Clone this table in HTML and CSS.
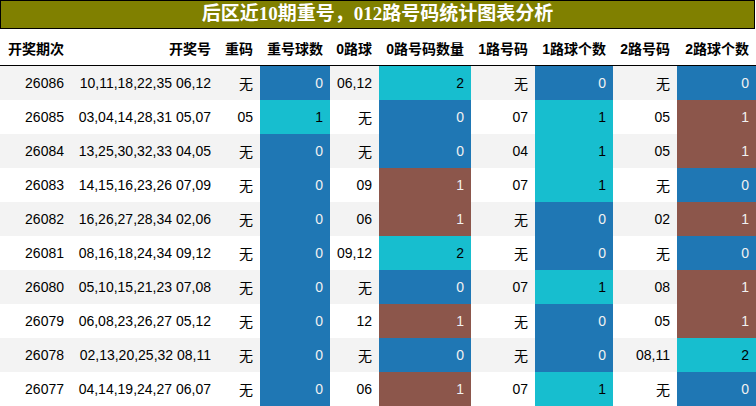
FILE: index.html
```html
<!DOCTYPE html>
<html lang="zh">
<head>
<meta charset="utf-8">
<title>后区近10期重号，012路号码统计图表分析</title>
<link rel="stylesheet" href="styles.css">
</head>
<body>
<div class="page">
  <div class="title">后区近10期重号，012路号码统计图表分析</div>
  <table class="stats">
    <colgroup>
      <col class="c1"><col class="c2"><col class="c3"><col class="c4"><col class="c5">
      <col class="c6"><col class="c7"><col class="c8"><col class="c9"><col class="c10">
    </colgroup>
    <thead>
      <tr>
        <th>开奖期次</th><th>开奖号</th><th>重码</th><th>重号球数</th><th>0路球</th>
        <th>0路号码数量</th><th>1路号码</th><th>1路球个数</th><th>2路号码</th><th>2路球个数</th>
      </tr>
    </thead>
    <tbody>
      <tr><td>26086</td><td>10,11,18,22,35 06,12</td><td>无</td><td class="b">0</td><td>06,12</td><td class="c">2</td><td>无</td><td class="b">0</td><td>无</td><td class="b">0</td></tr>
      <tr><td>26085</td><td>03,04,14,28,31 05,07</td><td>05</td><td class="c">1</td><td>无</td><td class="b">0</td><td>07</td><td class="c">1</td><td>05</td><td class="r">1</td></tr>
      <tr><td>26084</td><td>13,25,30,32,33 04,05</td><td>无</td><td class="b">0</td><td>无</td><td class="b">0</td><td>04</td><td class="c">1</td><td>05</td><td class="r">1</td></tr>
      <tr><td>26083</td><td>14,15,16,23,26 07,09</td><td>无</td><td class="b">0</td><td>09</td><td class="r">1</td><td>07</td><td class="c">1</td><td>无</td><td class="b">0</td></tr>
      <tr><td>26082</td><td>16,26,27,28,34 02,06</td><td>无</td><td class="b">0</td><td>06</td><td class="r">1</td><td>无</td><td class="b">0</td><td>02</td><td class="r">1</td></tr>
      <tr><td>26081</td><td>08,16,18,24,34 09,12</td><td>无</td><td class="b">0</td><td>09,12</td><td class="c">2</td><td>无</td><td class="b">0</td><td>无</td><td class="b">0</td></tr>
      <tr><td>26080</td><td>05,10,15,21,23 07,08</td><td>无</td><td class="b">0</td><td>无</td><td class="b">0</td><td>07</td><td class="c">1</td><td>08</td><td class="r">1</td></tr>
      <tr><td>26079</td><td>06,08,23,26,27 05,12</td><td>无</td><td class="b">0</td><td>12</td><td class="r">1</td><td>无</td><td class="b">0</td><td>05</td><td class="r">1</td></tr>
      <tr><td>26078</td><td>02,13,20,25,32 08,11</td><td>无</td><td class="b">0</td><td>无</td><td class="b">0</td><td>无</td><td class="b">0</td><td>08,11</td><td class="c">2</td></tr>
      <tr><td>26077</td><td>04,14,19,24,27 06,07</td><td>无</td><td class="b">0</td><td>06</td><td class="r">1</td><td>07</td><td class="c">1</td><td>无</td><td class="b">0</td></tr>
    </tbody>
  </table>
</div>
</body>
</html>
```
FILE: styles.css
```css
html, body {
  margin: 0;
  padding: 0;
  background: #ffffff;
}

.page {
  width: 756px;
  font-family: "Liberation Sans", "Noto Sans CJK SC", sans-serif;
  color: #000;
}

.title {
  box-sizing: border-box;
  width: 755px;
  height: 29px;
  border: 1px solid #000;
  background: #808000;
  color: #ffffff;
  font-family: "Liberation Serif", "Noto Sans CJK SC", serif;
  font-weight: bold;
  font-size: 19px;
  line-height: 26px;
  text-align: center;
  white-space: nowrap;
}

.stats {
  width: 756px;
  border-collapse: collapse;
  border-spacing: 0;
  table-layout: fixed;
}

.c1 { width: 71px; }
.c2 { width: 147px; }
.c3 { width: 42px; }
.c4 { width: 70px; }
.c5 { width: 49px; }
.c6 { width: 92px; }
.c7 { width: 64px; }
.c8 { width: 78px; }
.c9 { width: 64px; }
.c10 { width: 79px; }

.stats th,
.stats td {
  padding: 0 7px 0 0;
  text-align: right;
  white-space: nowrap;
  font-size: 14px;
  overflow: visible;
}

.stats th {
  height: 35px;
  font-weight: bold;
  border-bottom: 1px solid #000;
  padding-top: 1px;
}

.stats td {
  height: 34px;
  font-weight: normal;
}

.stats tbody tr:nth-child(odd) {
  background: #f3f3f3;
}

.stats tbody tr:nth-child(even) {
  background: #ffffff;
}

.stats td.b {
  background: #1f77b4;
  color: #f1f1f1;
}

.stats td.c {
  background: #17becf;
  color: #000;
}

.stats td.r {
  background: #8c564b;
  color: #f1f1f1;
}
```
